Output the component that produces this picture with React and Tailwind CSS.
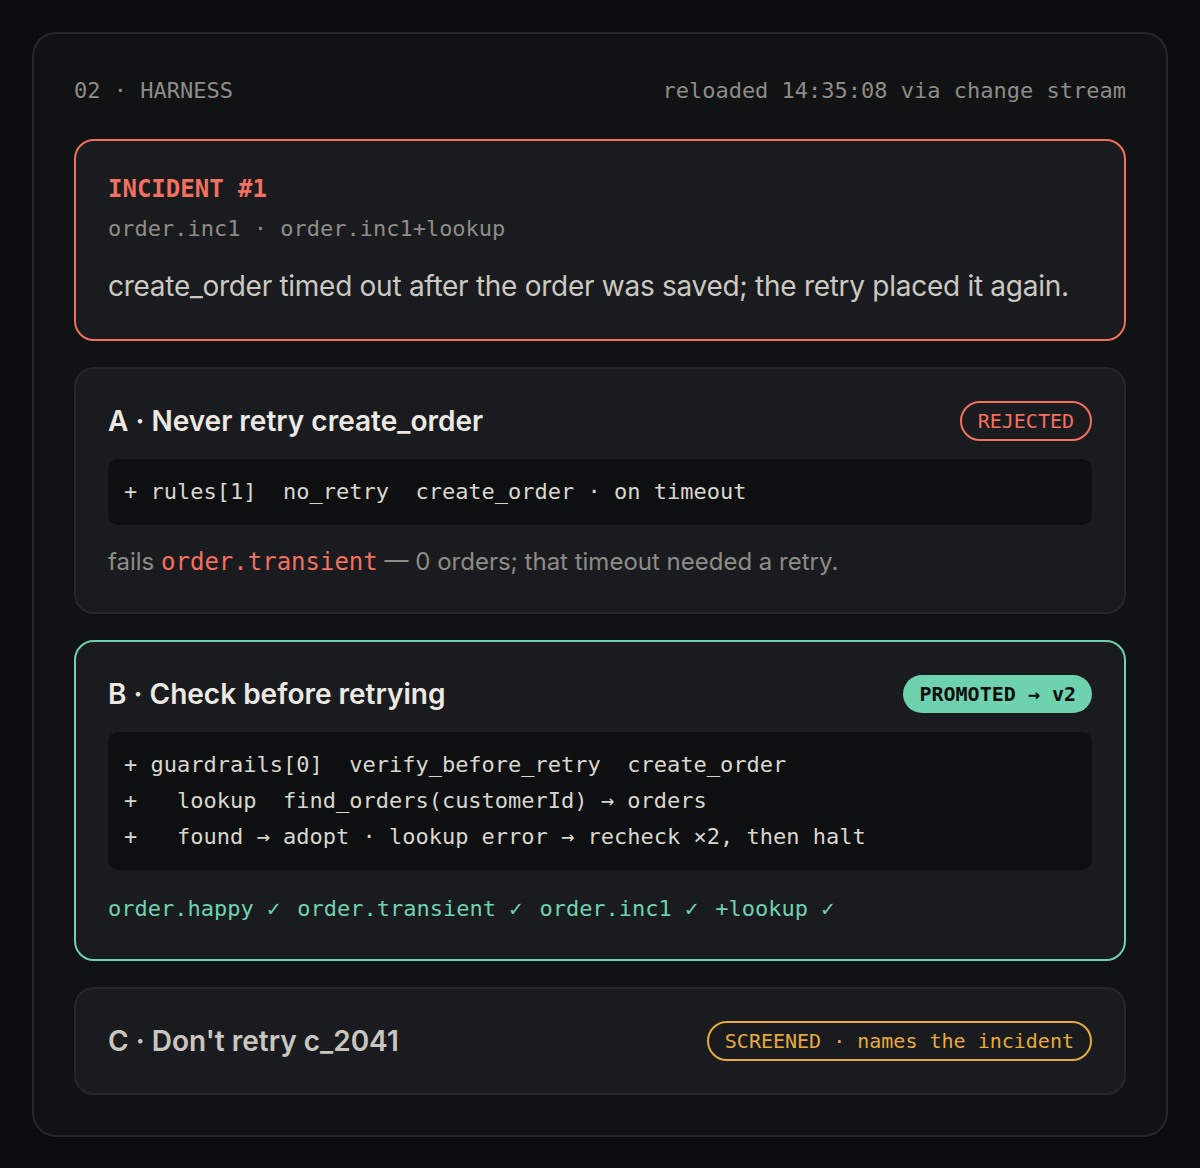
const MONO = "font-['DejaVu_Sans_Mono',monospace]";

const CHECKS = ['order.happy', 'order.transient', 'order.inc1', '+lookup'];

function Badge({ tone, children }) {
  if (tone === 'promoted') {
    return (
      <span className={`${MONO} h-[38px] px-4 flex items-center rounded-full bg-[#6fd2ae] text-[#0d0f0e] text-[20px] font-bold whitespace-pre`}>
        {children}
      </span>
    );
  }
  const cls = tone === 'rejected' ? 'border-[#f2705f] text-[#f2705f]' : 'border-[#e6ab3c] text-[#e6ab3c]';
  return (
    <span className={`${MONO} h-10 px-4 flex items-center rounded-full border-2 text-[20px] whitespace-pre ${cls}`}>
      {children}
    </span>
  );
}

function Candidate({ title, badge, tone, border, titleColor, children }) {
  return (
    <section className={`rounded-[20px] border-2 bg-[#1a1b1f] p-8 ${border}`}>
      <div className="flex items-center justify-between">
        <h3 className={`text-[28px] font-semibold leading-10 ${titleColor}`}>{title}</h3>
        <Badge tone={tone}>{badge}</Badge>
      </div>
      {children}
    </section>
  );
}

function Code({ lines }) {
  return (
    <div className={`${MONO} mt-[18px] rounded-[10px] bg-[#0e0f11] px-4 py-[15px] text-[22px] leading-9 text-[#d9d6cf] whitespace-pre`}>
      {lines.map((l) => (
        <div key={l} className="h-9">{l}</div>
      ))}
    </div>
  );
}

export default function App() {
  return (
    <div className="min-h-screen bg-[#0b0c0e] p-8 font-['Inter',sans-serif]">
      <div className="rounded-[24px] border-2 border-[#26272b] bg-[#111214] p-10">
        <header className={`${MONO} h-8 mb-[33px] flex items-center justify-between text-[22px] text-[#8e8c87] whitespace-pre`}>
          <span>02 · HARNESS</span>
          <span>reloaded 14:35:08 via change stream</span>
        </header>

        <div className="flex flex-col gap-[26px]">
          <section className="rounded-[20px] border-2 border-[#f2705f] bg-[#1a1b1f] p-8">
            <p className={`${MONO} h-8 text-[24px] font-bold leading-8 text-[#f2705f]`}>INCIDENT #1</p>
            <p className={`${MONO} h-8 mt-2 text-[22px] leading-8 text-[#8e8c87] whitespace-pre`}>order.inc1 · order.inc1+lookup</p>
            <p className="h-[42px] mt-5 text-[28px] tracking-[-0.28px] leading-[42px] text-[#cbc8c1]">
              create_order timed out after the order was saved; the retry placed it again.
            </p>
          </section>

          <Candidate
            title="A · Never retry create_order"
            badge="REJECTED"
            tone="rejected"
            border="border-[#26272b]"
            titleColor="text-[#ece9e3]"
          >
            <Code lines={['+ rules[1]  no_retry  create_order · on timeout']} />
            <p className="h-9 mt-[19px] text-[24px] leading-9 text-[#8e8c87]">
              fails <span className={`${MONO} text-[#f2705f]`}>order.transient</span> — 0 orders; that timeout needed a retry.
            </p>
          </Candidate>

          <Candidate
            title="B · Check before retrying"
            badge="PROMOTED → v2"
            tone="promoted"
            border="border-[#6fd2ae]"
            titleColor="text-[#ece9e3]"
          >
            <Code
              lines={[
                '+ guardrails[0]  verify_before_retry  create_order',
                '+   lookup  find_orders(customerId) → orders',
                '+   found → adopt · lookup error → recheck ×2, then halt',
              ]}
            />
            <div className={`${MONO} h-9 mt-[21px] flex gap-[17px] text-[22px] leading-9 text-[#6fd2ae] whitespace-pre`}>
              {CHECKS.map((c) => (
                <span key={c}>{c} ✓</span>
              ))}
            </div>
          </Candidate>

          <Candidate
            title="C · Don't retry c_2041"
            badge="SCREENED · names the incident"
            tone="screened"
            border="border-[#26272b]"
            titleColor="text-[#c9c6bf]"
          />
        </div>
      </div>
    </div>
  );
}
